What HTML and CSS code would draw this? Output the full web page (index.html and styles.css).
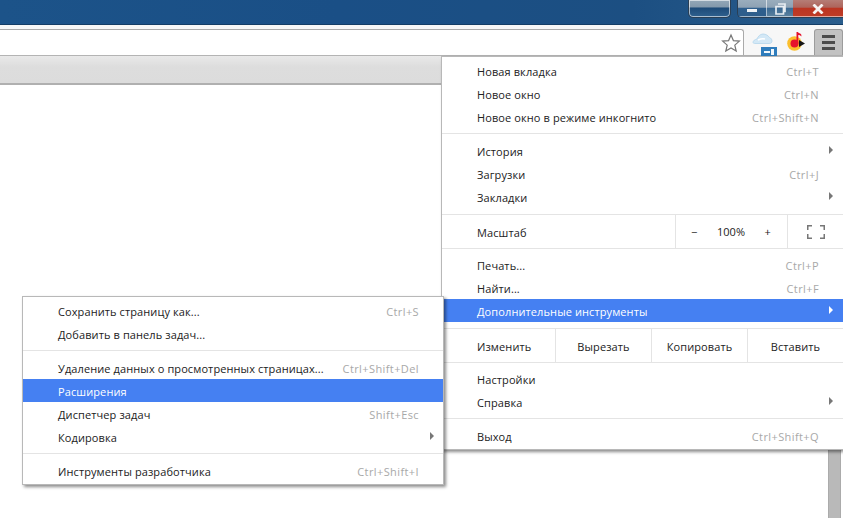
FILE: index.html
```html
<!DOCTYPE html>
<html lang="ru">
<head>
<meta charset="utf-8">
<title>Меню</title>
<link rel="stylesheet" href="styles.css">
</head>
<body>
<div class="window">
  <header class="titlebar">
    <div class="glass-btn"></div>
    <div class="controls">
      <div class="ctl ctl-min"><span class="min-bar"></span></div>
      <div class="ctl ctl-max"><svg width="11" height="12" viewBox="0 0 11 12"><path d="M3 1h7v7.500h-1.500M1 3.500h7.500v7.500H1z" fill="none" stroke="#e6ecf1" stroke-width="1.700"/></svg></div>
      <div class="ctl ctl-close"><svg width="12" height="10" viewBox="0 0 12 10"><path d="M1.500 0.500l9 9M10.500 0.500l-9 9" stroke="#f6f3f2" stroke-width="2.800"/></svg></div>
    </div>
  </header>
  <div class="toolbar">
    <div class="omnibox">
      <svg class="star" width="20" height="20" viewBox="0 0 20 20"><path d="M10 2l2.400 5.600 6 .5-4.600 4 1.400 6L10 14.900 4.800 18.100l1.400-6-4.600-4 6-.5z" fill="#fff" stroke="#777" stroke-width="1.200"/></svg>
    </div>
    <div class="ext ext-cloud">
      <svg width="26" height="26" viewBox="0 0 26 26">
        <path d="M1 12.500c0-2 2-3 4-3.500 1-2.500 3-5 6-5 3 0 5 1.500 6.500 3.500 1.500.5 2.500 2 2.500 3.500 0 1.500-1 2.500-3 2.500H4c-2 0-3-.3-3-1z" fill="#d3e8f6" stroke="#b4d6ec" stroke-width=".8"/>
        <path d="M6 10c2-1 4-2 7-1" fill="none" stroke="#fff" stroke-width="1.500"/>
        <rect x="9" y="17" width="16" height="9" fill="#2f7dbd"/>
        <path d="M12 21h6v2h-6zM19 19h3v6h-3z" fill="#f2f8fc"/>
      </svg>
    </div>
    <div class="ext ext-music">
      <svg width="20" height="24" viewBox="0 0 20 24">
        <circle cx="7.500" cy="14.500" r="7.300" fill="#fbbf2d"/>
        <circle cx="7.500" cy="14.500" r="4" fill="#e6122c"/>
        <path d="M9.500 14.500V3h1.300c.5 1.500 4.500 1 3.500 4.500-.8-1.200-2.200-1.400-3-1.400v8.400z" fill="#e6122c"/>
        <path d="M12 11l6 3.500-6 3.500z" fill="#151515"/>
      </svg>
    </div>
    <button class="menu-btn" type="button" aria-label="Меню"><span></span><span></span><span></span></button>
  </div>
  <div class="tabbar"></div>
  <main class="content">
    <div class="scrollbar"></div>
  </main>

  <nav class="menu menu-main">
    <div class="item"><span class="label">Новая вкладка</span><span class="key">Ctrl+T</span></div>
    <div class="item"><span class="label">Новое окно</span><span class="key">Ctrl+N</span></div>
    <div class="item"><span class="label">Новое окно в режиме инкогнито</span><span class="key">Ctrl+Shift+N</span></div>
    <hr class="sep">
    <div class="item"><span class="label">История</span><i class="arrow"></i></div>
    <div class="item"><span class="label">Загрузки</span><span class="key">Ctrl+J</span></div>
    <div class="item"><span class="label">Закладки</span><i class="arrow"></i></div>
    <hr class="sep sep-before-cells">
    <div class="row-cells row-zoom">
      <span class="label cell-label">Масштаб</span>
      <div class="zoom-cell"><span>−</span><span class="zoom-value">100%</span><span>+</span></div>
      <div class="full-cell"><svg width="18" height="14" viewBox="0 0 18 14"><path d="M.75 5V.75H5M13 .75h4.250V5M17.250 9v4.250H13M5 13.250H.75V9" fill="none" stroke="#777" stroke-width="1.500"/></svg></div>
    </div>
    <hr class="sep sep-after-cells">
    <div class="item"><span class="label">Печать...</span><span class="key">Ctrl+P</span></div>
    <div class="item"><span class="label">Найти...</span><span class="key">Ctrl+F</span></div>
    <div class="item active"><span class="label">Дополнительные инструменты</span><i class="arrow"></i></div>
    <hr class="sep sep-before-cells">
    <div class="row-cells row-edit">
      <span class="label cell-label">Изменить</span>
      <div class="edit-cell">Вырезать</div>
      <div class="edit-cell">Копировать</div>
      <div class="edit-cell edit-last">Вставить</div>
    </div>
    <hr class="sep sep-after-cells">
    <div class="item"><span class="label">Настройки</span></div>
    <div class="item"><span class="label">Справка</span><i class="arrow"></i></div>
    <hr class="sep">
    <div class="item"><span class="label">Выход</span><span class="key">Ctrl+Shift+Q</span></div>
  </nav>

  <nav class="menu menu-sub">
    <div class="item"><span class="label">Сохранить страницу как...</span><span class="key">Ctrl+S</span></div>
    <div class="item"><span class="label">Добавить в панель задач...</span></div>
    <hr class="sep">
    <div class="item"><span class="label">Удаление данных о просмотренных страницах...</span><span class="key">Ctrl+Shift+Del</span></div>
    <div class="item active"><span class="label">Расширения</span></div>
    <div class="item"><span class="label">Диспетчер задач</span><span class="key">Shift+Esc</span></div>
    <div class="item"><span class="label">Кодировка</span><i class="arrow"></i></div>
    <hr class="sep">
    <div class="item"><span class="label">Инструменты разработчика</span><span class="key">Ctrl+Shift+I</span></div>
  </nav>
</div>
</body>
</html>
```
FILE: styles.css
```css
* { box-sizing: border-box; }
html, body { margin: 0; padding: 0; }
body {
  width: 843px;
  height: 518px;
  overflow: hidden;
  background: #fff;
  font-family: "Open Sans", "Noto Sans", sans-serif;
  font-size: 11px;
  color: #222;
}
.window {
  position: relative;
  width: 843px;
  height: 518px;
  display: flex;
  flex-direction: column;
}
.titlebar {
  height: 25px;
  flex: none;
  display: flex;
  justify-content: flex-end;
  align-items: flex-start;
  background: linear-gradient(90deg, #1c5389 0%, #1a4f86 40%, #1c4f82 75%, #2a5d8c 100%);
  border-bottom: 1px solid #143d66;
}
.glass-btn {
  width: 43px;
  height: 18px;
  margin-right: 6px;
  border: 1px solid #2a3f55;
  border-top: 0;
  border-radius: 0 0 5px 5px;
  background: linear-gradient(180deg, #93a7b8 0%, #8398ab 42%, #1d4a78 46%, #2f618f 100%);
  box-shadow: inset 0 0 0 1px rgba(255,255,255,.6);
}
.controls {
  width: 106px;
  height: 18px;
  display: flex;
  border: 1px solid #2a3f55;
  border-top: 0;
  border-right: 0;
  border-radius: 0 0 0 5px;
  overflow: hidden;
}
.ctl {
  display: flex;
  align-items: center;
  justify-content: center;
  box-shadow: inset 0 -1px 0 rgba(255,255,255,.55);
}
.ctl-min {
  width: 29px;
  border-right: 1px solid rgba(255,255,255,.6);
  background: linear-gradient(180deg, #9aadbd 0%, #8ea2b4 42%, #2f5f8d 50%, #2d5d8b 100%);
}
.min-bar { width: 10px; height: 3px; margin-top: 3px; background: #eef2f5; }
.ctl-max {
  width: 26px;
  background: linear-gradient(180deg, #9aadbd 0%, #8ea2b4 42%, #3c6a93 50%, #5d829f 100%);
}
.ctl-close {
  flex: 1;
  background: linear-gradient(180deg, #b57d76 0%, #ae655c 42%, #bb3522 50%, #bf3c27 100%);
}
.toolbar {
  height: 31px;
  flex: none;
  display: flex;
  align-items: stretch;
  padding-top: 4px;
  background: #f7f7f7;
  border-bottom: 1px solid #b4b4b4;
}
.omnibox {
  width: 744px;
  flex: none;
  display: flex;
  justify-content: flex-end;
  align-items: center;
  padding-right: 2px;
  background: #fff;
  border: 1px solid #aaa;
  border-left: 0;
  border-bottom: 0;
  border-radius: 0 3px 0 0;
}
.star { display: block; }
.ext { flex: none; }
.ext-cloud { width: 26px; margin-left: 8px; padding-top: 1px; }
.ext-cloud svg { display: block; }
.ext-music { width: 20px; margin-left: 9px; }
.ext-music svg { display: block; }
.menu-btn {
  flex: none;
  width: 29px;
  height: 26px;
  margin: 0 0 0 7px;
  padding: 0;
  display: flex;
  flex-direction: column;
  align-items: center;
  justify-content: center;
  gap: 3px;
  background: #c2c2c2;
  border: 1px solid #9c9c9c;
  border-bottom: 0;
  border-radius: 3px 3px 0 0;
}
.menu-btn span { width: 13px; height: 3px; background: #4c4c4c; }
.tabbar {
  height: 29px;
  flex: none;
  background: linear-gradient(180deg, #e9e9e9 0%, #dddddd 40%, #dcdcdc 100%);
  border-bottom: 2px solid #b0b0b0;
}
.content {
  flex: 1;
  display: flex;
  justify-content: flex-end;
  background: #fff;
  padding-right: 2px;
}
.scrollbar {
  width: 13px;
  background: #b9b9b9;
  border-left: 1px solid #ababab;
  border-right: 1px solid #ababab;
}
.menu {
  position: absolute;
  display: flex;
  flex-direction: column;
  background: #fff;
  border: 1px solid #b8b8b8;
  padding: 2px 0;
  box-shadow: 2px 2px 3px rgba(0,0,0,.45);
}
.menu-main {
  left: 441px;
  top: 56px;
  width: 402px;
  border-right: 0;
}
.menu-sub {
  left: 22px;
  top: 296px;
  width: 422px;
}
.item {
  height: 23px;
  flex: none;
  display: flex;
  align-items: center;
  justify-content: space-between;
  position: relative;
  padding: 2px 24px 0 35px;
  letter-spacing: .1px;
}
.label { white-space: nowrap; }
.key { color: #a8a8a8; white-space: nowrap; letter-spacing: .4px; }
.active { background: #4580f2; color: #fff; }
.arrow {
  position: absolute;
  right: 10px;
  top: 7px;
  width: 0;
  height: 0;
  border-left: 4px solid #777;
  border-top: 4px solid transparent;
  border-bottom: 4px solid transparent;
}
.menu-sub .arrow { right: 9px; }
.active .arrow { border-left-color: #fff; }
.sep {
  height: 1px;
  flex: none;
  margin: 5px 0;
  padding: 0;
  border: 0;
  background: #e4e4e4;
}
.sep-before-cells { margin: 6px 0 0; }
.sep-after-cells { margin: 0 0 4px; }
.row-cells {
  height: 33px;
  flex: none;
  display: flex;
  align-items: stretch;
  letter-spacing: .1px;
}
.cell-label {
  display: flex;
  align-items: center;
  padding: 2px 0 0 35px;
}
.row-zoom .cell-label { width: 233px; }
.zoom-cell {
  width: 112px;
  display: flex;
  align-items: center;
  justify-content: space-between;
  padding: 0 16px 0 15px;
  border-left: 1px solid #e4e4e4;
}
.zoom-value { letter-spacing: 0; }
.full-cell {
  flex: 1;
  display: flex;
  align-items: center;
  justify-content: center;
  border-left: 1px solid #e4e4e4;
}
.row-edit .cell-label { width: 113px; }
.edit-cell {
  width: 96px;
  display: flex;
  align-items: center;
  justify-content: center;
  padding-top: 1px;
  border-left: 1px solid #e4e4e4;
}
.edit-last { flex: 1; }
```
